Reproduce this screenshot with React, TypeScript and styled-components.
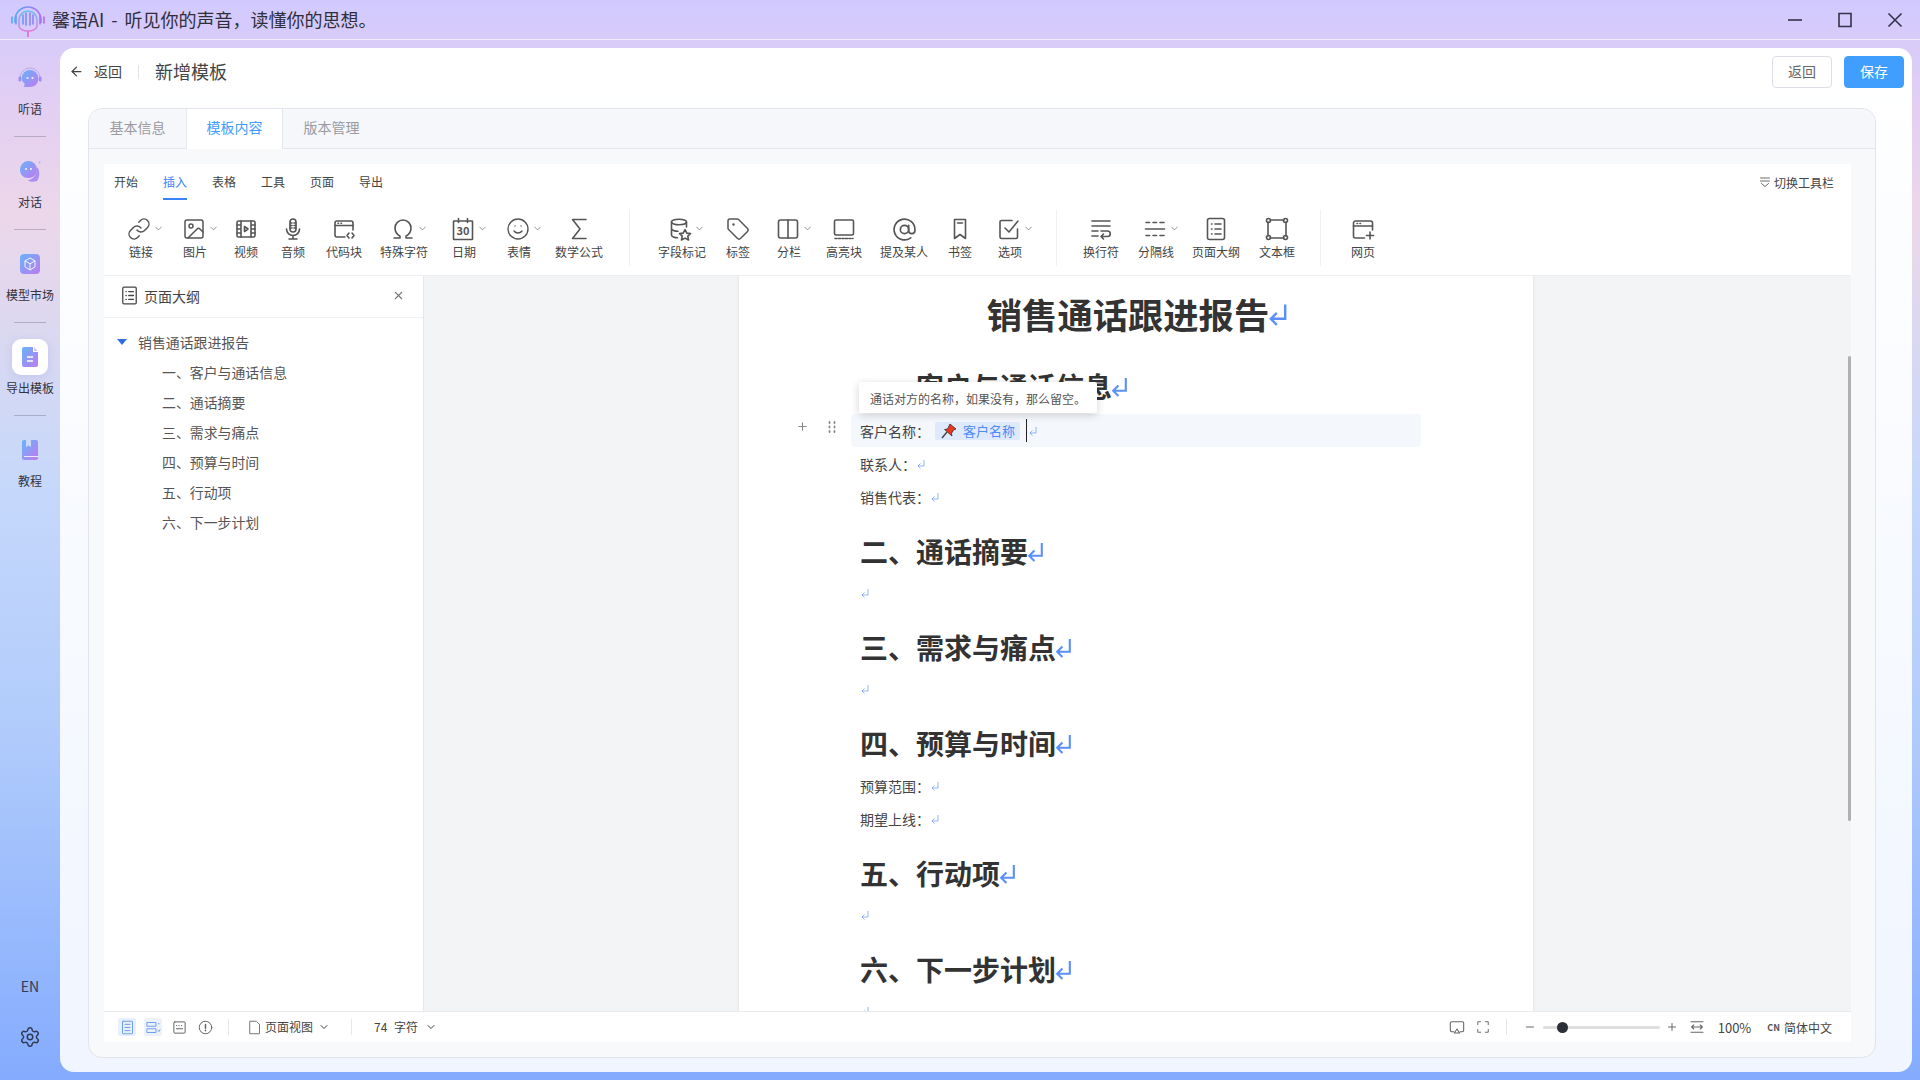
import styled, { createGlobalStyle } from "styled-components";
import type { ReactNode } from "react";
import { ArrowLeft, AtSign, ChevronDown, Image, Link, Minus, Plus, Settings, Smile, Tag, X } from "lucide-react";

const Global = createGlobalStyle`
  html, body { margin: 0; padding: 0; height: 100%; overflow: hidden; }
  body { font-family: "Noto Sans CJK SC", "Noto Sans", sans-serif; color: #333; }
  #root { height: 100%; }
`;

const Shell = styled.div`
  height: 1080px;
  display: flex;
  flex-direction: column;
  background: linear-gradient(180deg, #d1c9fe 0%, #e3cff2 10%, #ecd7ea 20%, #dcd8f0 30%, #c6d8fb 45%, #b0cbfb 68%, #84abfe 100%);
`;

const TitleBar = styled.div`
  height: 39px;
  flex: none;
  display: flex;
  align-items: center;
  padding-left: 10px;
  border-bottom: 1px solid rgba(255, 255, 255, 0.65);
`;

const AppTitle = styled.div`
  font-size: 18px;
  line-height: 24px;
  color: #2f2f3a;
  margin: 0 0 2px 6px;
  word-spacing: 3px;
`;

const WinControls = styled.div`
  margin-left: auto;
  display: flex;
  align-items: center;
  gap: 32px;
  padding-right: 16px;
  color: #33334a;
`;

const WinBtn = styled.svg`
  width: 18px;
  height: 18px;
  display: block;
  stroke: currentColor;
  stroke-width: 1.6;
  fill: none;
`;

const Body = styled.div`
  flex: 1;
  display: flex;
  min-height: 0;
`;

const Sidebar = styled.div`
  width: 60px;
  flex: none;
  display: flex;
  flex-direction: column;
  align-items: center;
  padding: 20px 0 32px;
  box-sizing: border-box;
`;

const NavIcon = styled.div<{ $active?: boolean }>`
  width: 36px;
  height: 36px;
  display: flex;
  align-items: center;
  justify-content: center;
  border-radius: 9px;
  background: ${(p) => (p.$active ? "#fff" : "transparent")};
  box-shadow: ${(p) => (p.$active ? "0 2px 8px rgba(120,130,200,.2)" : "none")};
`;

const NavLabel = styled.div`
  font-size: 12px;
  line-height: 16px;
  margin-top: 5px;
  color: #33333f;
  white-space: nowrap;
`;

const NavDivider = styled.div`
  width: 32px;
  height: 1px;
  margin: 19px 0 16px;
  background: rgba(110, 110, 130, 0.4);
`;

const Lang = styled.div`
  margin-top: auto;
  font-size: 14px;
  line-height: 20px;
  color: #2f3a55;
`;

const Gear = styled.div`
  margin-top: 30px;
  height: 22px;
  color: #2f3a55;
`;

const Panel = styled.div`
  flex: 1;
  min-width: 0;
  margin: 8px 8px 8px 0;
  border-radius: 14px;
  background: linear-gradient(180deg, #ffffff 0%, #f0f5ff 100%);
  display: flex;
  flex-direction: column;
`;

const Header = styled.div`
  height: 48px;
  flex: none;
  display: flex;
  align-items: center;
  padding: 0 8px 0 9px;
`;

const BackLink = styled.div`
  display: flex;
  align-items: center;
  gap: 10px;
  font-size: 14px;
  color: #444;
  padding-bottom: 2px;
`;

const HeaderSep = styled.div`
  width: 1px;
  height: 14px;
  background: #dfe2e8;
  margin: 0 16px;
`;

const PageName = styled.div`
  font-size: 18px;
  color: #444;
  padding-bottom: 2px;
`;

const HeaderActions = styled.div`
  margin-left: auto;
  display: flex;
  gap: 12px;
`;

const Btn = styled.div<{ $primary?: boolean }>`
  width: 60px;
  height: 32px;
  box-sizing: border-box;
  border-radius: 4px;
  padding-bottom: 2px;
  display: flex;
  align-items: center;
  justify-content: center;
  font-size: 14px;
  color: ${(p) => (p.$primary ? "#fff" : "#666")};
  background: ${(p) => (p.$primary ? "#409eff" : "#fff")};
  border: 1px solid ${(p) => (p.$primary ? "#409eff" : "#dcdfe6")};
`;

const Card = styled.div`
  flex: 1;
  min-height: 0;
  margin: 12px 36px 14px 28px;
  border: 1px solid #e1e4ec;
  border-radius: 14px;
  background: #f8f9fa;
  display: flex;
  flex-direction: column;
  overflow: hidden;
`;

const TabBar = styled.div`
  height: 39px;
  flex: none;
  display: flex;
  background: #f5f7fb;
  border-bottom: 1px solid #e4e7ed;
`;

const Tab = styled.div<{ $active?: boolean }>`
  width: 97px;
  height: ${(p) => (p.$active ? "40px" : "39px")};
  box-sizing: border-box;
  padding-bottom: 4px;
  display: flex;
  align-items: center;
  justify-content: center;
  font-size: 14px;
  color: ${(p) => (p.$active ? "#409eff" : "#9a9a9f")};
  background: ${(p) => (p.$active ? "#fff" : "transparent")};
  border-left: 1px solid ${(p) => (p.$active ? "#e4e7ed" : "transparent")};
  border-right: 1px solid ${(p) => (p.$active ? "#e4e7ed" : "transparent")};
`;

const CardBody = styled.div`
  flex: 1;
  min-height: 0;
  padding: 15px 24px 15px 15px;
  display: flex;
`;

const Editor = styled.div`
  flex: 1;
  min-width: 0;
  display: flex;
  flex-direction: column;
  background: #fff;
`;

const Ribbon = styled.div`
  height: 112px;
  flex: none;
  box-sizing: border-box;
  border-bottom: 1px solid #eceef1;
`;

const RibbonTabs = styled.div`
  height: 36px;
  display: flex;
  padding: 0 17px 0 10px;
  box-sizing: border-box;
`;

const RibbonTab = styled.div<{ $active?: boolean }>`
  margin-right: 25px;
  font-size: 12px;
  line-height: 36px;
  color: ${(p) => (p.$active ? "#3b82f6" : "#444")};
  border-bottom: 2px solid ${(p) => (p.$active ? "#3b82f6" : "transparent")};
`;

const ToggleBar = styled.div`
  margin-left: auto;
  display: flex;
  align-items: center;
  gap: 3px;
  font-size: 12px;
  color: #444;
`;

const ToolRow = styled.div`
  height: 75px;
  display: flex;
  align-items: center;
  padding: 1px 0 0 10px;
  box-sizing: border-box;
`;

const Tool = styled.div<{ $w: number }>`
  width: ${(p) => p.$w}px;
  flex: none;
  display: flex;
  flex-direction: column;
  align-items: center;
  color: #555;
`;

const ToolIcon = styled.div<{ $shift?: number }>`
  position: relative;
  width: 24px;
  height: 24px;
  margin-left: ${(p) => p.$shift ?? 0}px;
`;

const Caret = styled.div`
  position: absolute;
  left: 26px;
  top: 6px;
  line-height: 0;
  color: #888;
`;

const ToolLabel = styled.div`
  font-size: 12px;
  line-height: 16px;
  margin-top: 3px;
  color: #444;
  white-space: nowrap;
`;

const ToolSep = styled.div<{ $gap?: number }>`
  width: 1px;
  height: 56px;
  flex: none;
  margin: 0 ${(p) => p.$gap ?? 17}px;
  background: #eef0f2;
`;

const Work = styled.div`
  flex: 1;
  min-height: 0;
  display: flex;
  position: relative;
  background: #f3f4f6;
`;

const Outline = styled.div`
  width: 319px;
  flex: none;
  background: #fff;
  border-right: 1px solid #e6e7ea;
`;

const OutlineHead = styled.div`
  height: 42px;
  box-sizing: border-box;
  display: flex;
  align-items: center;
  padding: 0 18px 2px 16px;
  border-bottom: 1px solid #f0f1f3;
  font-size: 14px;
  color: #444;
  gap: 5px;
`;

const CloseBtn = styled.div`
  margin-left: auto;
  line-height: 0;
  color: #777;
`;

const OutlineList = styled.div`
  padding-top: 9px;
`;

const OutlineRoot = styled.div`
  display: flex;
  align-items: center;
  height: 30px;
  padding-left: 13px;
  gap: 11px;
  font-size: 13.9px;
  color: #555;
`;

const RootCaret = styled.div`
  width: 0;
  height: 0;
  border-left: 5px solid transparent;
  border-right: 5px solid transparent;
  border-top: 6px solid #2f6fe4;
`;

const OutlineItem = styled.div`
  height: 30px;
  line-height: 30px;
  padding-left: 58px;
  font-size: 13.9px;
  color: #555;
`;

const Canvas = styled.div`
  flex: 1;
  min-width: 0;
  display: flex;
  padding-left: 315px;
  overflow: hidden;
`;

const Page = styled.div`
  width: 794px;
  flex: none;
  box-sizing: border-box;
  padding: 13px 92px 0 121px;
  background: #fff;
  box-shadow: 0 0 3px rgba(0, 0, 0, 0.12);
  position: relative;
`;

const DocTitle = styled.div`
  font-size: 35.3px;
  line-height: 50px;
  font-weight: 700;
  text-align: center;
  color: #333;
  margin: 0 0 27px -24px;
  display: flex;
  justify-content: center;
  align-items: center;

  svg {
    margin-left: -3px;
  }
`;

const H1 = styled.div<{ $mb?: number }>`
  font-size: 28px;
  line-height: 40px;
  height: 40px;
  font-weight: 700;
  color: #333;
  margin: 18px 0 ${(p) => p.$mb ?? 5}px;
  display: flex;
  align-items: center;
  white-space: nowrap;

  svg {
    margin-left: -3px;
  }
`;

const Para = styled.div`
  height: 33px;
  font-size: 14px;
  display: flex;
  align-items: center;
  color: #444;
`;

const ActiveRow = styled(Para)`
  margin: 0 20px 0 -9px;
  padding-left: 9px;
  background: #f4f7fc;
  border-radius: 4px;
  position: relative;
`;

const RowHandles = styled.div`
  position: absolute;
  left: -55px;
  top: 6px;
  display: flex;
  gap: 17px;
  align-items: center;
  color: #888;
`;

const Tip = styled.div`
  position: absolute;
  left: 8px;
  top: -32px;
  width: 238px;
  height: 31px;
  box-sizing: border-box;
  padding-left: 11px;
  line-height: 33px;
  font-size: 12px;
  color: #555;
  background: #fff;
  border-radius: 2px;
  box-shadow: 0 2px 8px rgba(0, 0, 0, 0.18);
  white-space: nowrap;
`;

const Chip = styled.div`
  width: 85px;
  height: 18px;
  margin-left: 5px;
  padding-left: 6px;
  box-sizing: border-box;
  border-radius: 2px;
  background: #deeafc;
  color: #4d8bf5;
  font-size: 13px;
  display: flex;
  align-items: center;
  gap: 6px;
  white-space: nowrap;
`;

const Caretline = styled.div`
  width: 1px;
  height: 23px;
  margin: 0 1px 0 6px;
  background: #222;
`;

const Thumb = styled.div`
  position: absolute;
  right: 0;
  top: 80px;
  width: 3px;
  height: 465px;
  background: #b0b0b2;
  border-radius: 2px;
`;

const Foot = styled.div`
  height: 31px;
  flex: none;
  box-sizing: border-box;
  border-top: 1px solid #e8e9ec;
  display: flex;
  align-items: center;
  padding: 0 19px 0 14px;
  font-size: 12px;
  color: #444;
`;

const FootBox = styled.div<{ $tone?: string }>`
  width: 18px;
  height: 18px;
  margin-right: 8px;
  border-radius: 2px;
  background: ${(p) => p.$tone ?? "transparent"};
  display: flex;
  align-items: center;
  justify-content: center;
`;

const FootSep = styled.div<{ $l: number; $r: number }>`
  width: 1px;
  height: 16px;
  background: #e6e7ea;
  margin: 0 ${(p) => p.$r}px 0 ${(p) => p.$l}px;
`;

const FootText = styled.div`
  display: flex;
  align-items: center;
  white-space: nowrap;
  line-height: 0;
`;

const FootLabel = styled.span`
  line-height: 16px;
  margin-left: 3px;
  word-spacing: 4px;
`;

const FootRight = styled.div`
  margin-left: auto;
  display: flex;
  align-items: center;
`;

const Track = styled.div`
  width: 117px;
  height: 3px;
  margin: 0 6px 0 7px;
  background: #dedede;
  border-radius: 2px;
  position: relative;
`;

const Knob = styled.div`
  position: absolute;
  left: 14px;
  top: -4px;
  width: 11px;
  height: 11px;
  border-radius: 50%;
  background: #2b2f36;
`;

const Zoom = styled.div`
  margin: 0 16px 0 13px;
  font-size: 13px;
`;

const CN = styled.span`
  font-size: 9px;
  font-weight: 700;
  margin-right: 4px;
  color: #555;
`;

const Glyph = styled.svg`
  width: 24px;
  height: 24px;
  display: block;
  fill: none;
  stroke: currentColor;
  stroke-width: 1.6;
  stroke-linecap: round;
  stroke-linejoin: round;
`;

const SmallGlyph = styled(Glyph)<{ $s?: number }>`
  width: ${(p) => p.$s ?? 16}px;
  height: ${(p) => p.$s ?? 16}px;
  flex: none;
`;

const ReturnGlyph = styled.svg<{ $s: number }>`
  width: ${(p) => p.$s}px;
  height: ${(p) => p.$s}px;
  flex: none;
  display: block;
  fill: none;
  stroke: #5b8ff9;
  stroke-width: ${(p) => (p.$s > 12 ? 2 : 1.3)};
`;

const Ret = ({ s }: { s: number }) => (
  <ReturnGlyph $s={s} viewBox="0 0 20 20">
    <path d="M16 2v12H4M9 9l-5 5 5 5" />
  </ReturnGlyph>
);

const Icon = ({ children }: { children: ReactNode }) => <Glyph viewBox="0 0 24 24">{children}</Glyph>;

const tabs = ["开始", "插入", "表格", "工具", "页面", "导出"];

type ToolDef = { label: string; w: number; caret?: boolean; shift?: number; icon: ReactNode };

const groupA: ToolDef[] = [
  { label: "链接", w: 54, caret: true, shift: -4, icon: <Link size={24} strokeWidth={1.5} /> },
  { label: "图片", w: 54, caret: true, shift: -2, icon: <Image size={24} strokeWidth={1.5} /> },
  {
    label: "视频", w: 48,
    icon: (
      <Icon>
        <rect x="3" y="4" width="18" height="16" rx="1.5" />
        <path d="M7 4v16M17 4v16M3 8h4M3 12h4M3 16h4M17 8h4M17 12h4M17 16h4" />
        <path d="M10.500 9.500l3.500 2.500-3.500 2.500z" />
      </Icon>
    ),
  },
  {
    label: "音频", w: 46,
    icon: (
      <Icon>
        <rect x="9" y="2" width="6" height="13" rx="3" />
        <path d="M9 6h2M9 8.500h2M9 11h2M13 6h2M13 8.500h2M13 11h2" />
        <path d="M5.500 12a6.500 6.500 0 0 0 13 0M12 18.500V22M8 22h8" />
      </Icon>
    ),
  },
  {
    label: "代码块", w: 56,
    icon: (
      <Icon>
        <path d="M21 13V6a2 2 0 0 0-2-2H5a2 2 0 0 0-2 2v12a2 2 0 0 0 2 2h8" />
        <path d="M3 8.500h18M6 6.200h.5M9 6.200h.5M17 16l-2 2.500 2 2.500M20 16l2 2.500-2 2.500" />
      </Icon>
    ),
  },
  {
    label: "特殊字符", w: 64, caret: true, shift: -2,
    icon: (
      <Icon>
        <path d="M3 21h6v-1.800C6 17.500 4 14.500 4 11a8 8 0 0 1 16 0c0 3.500-2 6.500-5 8.200V21h6" />
      </Icon>
    ),
  },
  {
    label: "日期", w: 56, caret: true, shift: -3,
    icon: (
      <Icon>
        <rect x="2.500" y="4" width="19" height="18.500" rx="0.5" />
        <path d="M7.500 1.500v4M16.500 1.500v4" />
        <text x="12" y="18" textAnchor="middle" fontSize="11" fontWeight="700" fill="currentColor" stroke="none">30</text>
      </Icon>
    ),
  },
  { label: "表情", w: 54, caret: true, shift: -2, icon: <Smile size={24} strokeWidth={1.4} /> },
  {
    label: "数学公式", w: 66,
    icon: (
      <Icon>
        <path d="M19 2.500H5.500L13 12l-7.500 9.500H19" />
      </Icon>
    ),
  },
];

const groupB: ToolDef[] = [
  {
    label: "字段标记", w: 70, caret: true, shift: -5,
    icon: (
      <Icon>
        <ellipse cx="11" cy="5" rx="7.500" ry="2.800" />
        <path d="M3.500 5v13c0 1.600 3 2.800 6 2.800M18.500 5v5M3.500 11.500c0 1.500 3 2.800 6.500 2.800" />
        <path d="M17 12.500l1.800 3.600 3.700.5-2.700 2.600.7 3.800-3.500-1.900-3.500 1.900.7-3.800-2.700-2.600 3.700-.5z" fill="#fff" />
      </Icon>
    ),
  },
  { label: "标签", w: 42, icon: <Tag size={24} strokeWidth={1.5} /> },
  {
    label: "分栏", w: 60, caret: true, shift: -2,
    icon: (
      <Icon>
        <rect x="2.500" y="3" width="19" height="18" rx="2" />
        <path d="M12 3v18" />
      </Icon>
    ),
  },
  {
    label: "高亮块", w: 50,
    icon: (
      <Icon>
        <rect x="2.500" y="3" width="19" height="15" rx="1.500" />
        <path d="M3 21.500h18" strokeDasharray="2 1.500" />
      </Icon>
    ),
  },
  { label: "提及某人", w: 70, icon: <AtSign size={25} strokeWidth={1.6} /> },
  {
    label: "书签", w: 42,
    icon: (
      <Icon>
        <path d="M6.500 2.500h11v19L12 17.500l-5.500 4z" />
        <path d="M9.500 6h5" />
      </Icon>
    ),
  },
  {
    label: "选项", w: 58, caret: true, shift: -2,
    icon: (
      <Icon>
        <path d="M20.500 12v8a1.500 1.500 0 0 1-1.500 1.500H4.500A1.500 1.500 0 0 1 3 20V5a1.500 1.500 0 0 1 1.500-1.500H15" />
        <path d="M8 11l4 4 9-11" />
      </Icon>
    ),
  },
];

const groupC: ToolDef[] = [
  {
    label: "换行符", w: 54,
    icon: (
      <Icon>
        <path d="M3 4h18M3 9h18M3 14h6M3 19h6" />
        <path d="M12 14h6.500a2.500 2.500 0 0 1 0 5.500H12M14.500 17l-2.500 2.500 2.500 2.500" />
      </Icon>
    ),
  },
  {
    label: "分隔线", w: 56, caret: true, shift: -2,
    icon: (
      <Icon>
        <path d="M2.500 12h19M3 5.500h3.500M10 5.500h3.500M17 5.500h4M3 18.500h3.500M10 18.500h3.500M17 18.500h4" />
      </Icon>
    ),
  },
  {
    label: "页面大纲", w: 64,
    icon: (
      <Icon>
        <rect x="3.500" y="1.500" width="17" height="21" rx="2" />
        <path d="M7.500 7h.5M7.500 12h.5M7.500 17h.5M11 7h6M11 12h6M11 17h6" />
      </Icon>
    ),
  },
  {
    label: "文本框", w: 58,
    icon: (
      <Icon>
        <path d="M5 3h14M5 21h14M3 5v14M21 5v14" />
        <circle cx="3.500" cy="3.500" r="2" />
        <circle cx="20.500" cy="3.500" r="2" />
        <circle cx="3.500" cy="20.500" r="2" />
        <circle cx="20.500" cy="20.500" r="2" />
      </Icon>
    ),
  },
];

const groupD: ToolDef[] = [
  {
    label: "网页", w: 56,
    icon: (
      <Icon>
        <path d="M21.500 13V6a2 2 0 0 0-2-2h-15a2 2 0 0 0-2 2v13a2 2 0 0 0 2 2h9" />
        <path d="M2.500 9h19M6 6.500h.5M9 6.500h.5M19 15v7M15.500 18.500h7" />
      </Icon>
    ),
  },
];

const renderTools = (list: ToolDef[]) =>
  list.map((t) => (
    <Tool key={t.label} $w={t.w}>
      <ToolIcon $shift={t.shift}>
        {t.icon}
        {t.caret ? (
          <Caret>
            <ChevronDown size={11} />
          </Caret>
        ) : null}
      </ToolIcon>
      <ToolLabel>{t.label}</ToolLabel>
    </Tool>
  ));

const outlineItems = ["一、客户与通话信息", "二、通话摘要", "三、需求与痛点", "四、预算与时间", "五、行动项", "六、下一步计划"];

const Logo = () => (
  <svg width="36" height="36" viewBox="0 0 36 36" fill="none">
    <defs>
      <linearGradient id="lg" x1="0" y1="0" x2="1" y2="0">
        <stop offset="0" stopColor="#5aa7f7" />
        <stop offset="0.5" stopColor="#7f8cf5" />
        <stop offset="1" stopColor="#b56cf0" />
      </linearGradient>
      <linearGradient id="lp" x1="0" y1="0" x2="0" y2="1">
        <stop offset="0" stopColor="#64c0f5" />
        <stop offset="1" stopColor="#e07ad8" />
      </linearGradient>
    </defs>
    <path d="M5 21V18a13 13 0 0 1 26 0v3" stroke="url(#lg)" strokeWidth="1.6" />
    <path d="M9 20v-2a9 9 0 0 1 18 0v6a9 5 0 0 1-18 0z" stroke="url(#lp)" strokeWidth="1.5" />
    <path d="M2 15v6M6 14v8M13 13v9M16 11v12M20 11v12M23 13v9M30 14v8M34 15v6" stroke="url(#lg)" strokeWidth="1.6" strokeLinecap="round" />
    <path d="M18 29v6" stroke="#d77ee0" strokeWidth="2" />
  </svg>
);

const NavGrad = ({ id }: { id: string }) => (
  <defs>
    <linearGradient id={id} x1="0" y1="0" x2="1" y2="1">
      <stop offset="0" stopColor="#66b4fa" />
      <stop offset="1" stopColor="#c07af0" />
    </linearGradient>
  </defs>
);

const NavListen = () => (
  <svg width="26" height="26" viewBox="0 0 26 26" fill="none">
    <NavGrad id="n1" />
    <path d="M3 13a10 10 0 0 1 20 0" stroke="#b9a9ee" strokeWidth="1" />
    <rect x="1.500" y="11.500" width="2.500" height="5" rx="1.200" fill="#9a8cf0" />
    <rect x="22" y="11.500" width="2.500" height="5" rx="1.200" fill="#9a8cf0" />
    <path d="M13 5a8.500 8.500 0 0 1 8.500 8.500c0 5-4 8.500-8.500 8.500H6.500c1-1 1.300-2.500 1-3.500-2-1.600-3-3-3-5A8.500 8.500 0 0 1 13 5z" fill="url(#n1)" />
    <circle cx="10.500" cy="13" r="1.100" fill="#fff" opacity="0.85" />
    <circle cx="15.500" cy="13" r="1.100" fill="#fff" opacity="0.85" />
  </svg>
);

const NavChat = () => (
  <svg width="26" height="26" viewBox="0 0 26 26" fill="none">
    <NavGrad id="n2" />
    <path d="M20 9c3 3 3 10 0 14-3 1-8 1-9-1 5 0 9-5 9-13z" fill="#a98df0" />
    <path d="M11.500 3a8.500 8.500 0 0 1 8.500 8.500c0 5-4 8.500-8.500 8.500-3 0-5-1-6-2-1.500-1.500-2.500-4-2.500-6.500A8.500 8.500 0 0 1 11.500 3z" fill="url(#n2)" />
    <circle cx="9" cy="11" r="1.100" fill="#fff" opacity="0.85" />
    <circle cx="14" cy="11" r="1.100" fill="#fff" opacity="0.85" />
    <circle cx="22.500" cy="4.500" r="1" fill="#c3a5ef" />
  </svg>
);

const NavMarket = () => (
  <svg width="20" height="20" viewBox="0 0 20 20" fill="none">
    <NavGrad id="n3" />
    <rect width="20" height="20" rx="4" fill="url(#n3)" />
    <path d="M10 4l5 2.800v6L10 16l-5-3.200v-6zM5 6.800l5 3 5-3M10 9.800V16" stroke="#fff" strokeWidth="1" opacity="0.9" />
  </svg>
);

const NavDoc = () => (
  <svg width="16" height="20" viewBox="0 0 16 20" fill="none">
    <NavGrad id="n4" />
    <path d="M2 0h9v5h5v13a2 2 0 0 1-2 2H2a2 2 0 0 1-2-2V2a2 2 0 0 1 2-2z" fill="url(#n4)" />
    <path d="M12 0l4 4h-4z" fill="#d9c8f5" />
    <path d="M5 10h6M5 14h6" stroke="#fff" strokeWidth="1.400" />
  </svg>
);

const NavBook = () => (
  <svg width="16" height="20" viewBox="0 0 16 20" fill="none">
    <NavGrad id="n5" />
    <path d="M2 0h2v7l2.500-1.500L9 7V0h5a2 2 0 0 1 2 2v16a2 2 0 0 1-2 2H2a2 2 0 0 1-2-2V2a2 2 0 0 1 2-2z" fill="url(#n5)" />
    <path d="M2 16.500h14" stroke="#fff" strokeWidth="1" opacity="0.8" />
  </svg>
);

const Pin = () => (
  <svg width="16" height="16" viewBox="0 0 16 16">
    <path d="M1 15l5-6" stroke="#444" strokeWidth="1.400" />
    <path d="M9 1l6 5-2.500 1-2 3.500L11 13 3.500 6.500 6.500 6 8 3z" fill="#e8391f" stroke="#222" strokeWidth="0.700" />
  </svg>
);

export default function App() {
  return (
    <Shell>
      <Global />
      <TitleBar>
        <Logo />
        <AppTitle>馨语AI - 听见你的声音，读懂你的思想。</AppTitle>
        <WinControls>
          <WinBtn viewBox="0 0 18 18"><path d="M2 9h14" /></WinBtn>
          <WinBtn viewBox="0 0 18 18"><path d="M3 2.500h12v13H3z" /></WinBtn>
          <WinBtn viewBox="0 0 18 18"><path d="M2.500 2.500l13 13M15.500 2.500l-13 13" /></WinBtn>
        </WinControls>
      </TitleBar>
      <Body>
        <Sidebar>
          <NavIcon><NavListen /></NavIcon>
          <NavLabel>听语</NavLabel>
          <NavDivider />
          <NavIcon><NavChat /></NavIcon>
          <NavLabel>对话</NavLabel>
          <NavDivider />
          <NavIcon><NavMarket /></NavIcon>
          <NavLabel>模型市场</NavLabel>
          <NavDivider />
          <NavIcon $active><NavDoc /></NavIcon>
          <NavLabel>导出模板</NavLabel>
          <NavDivider />
          <NavIcon><NavBook /></NavIcon>
          <NavLabel>教程</NavLabel>
          <Lang>EN</Lang>
          <Gear><Settings size={22} strokeWidth={1.6} /></Gear>
        </Sidebar>
        <Panel>
          <Header>
            <BackLink>
              <ArrowLeft size={15} />
              返回
            </BackLink>
            <HeaderSep />
            <PageName>新增模板</PageName>
            <HeaderActions>
              <Btn>返回</Btn>
              <Btn $primary>保存</Btn>
            </HeaderActions>
          </Header>
          <Card>
            <TabBar>
              <Tab>基本信息</Tab>
              <Tab $active>模板内容</Tab>
              <Tab>版本管理</Tab>
            </TabBar>
            <CardBody>
              <Editor>
                <Ribbon>
                  <RibbonTabs>
                    {tabs.map((t) => (
                      <RibbonTab key={t} $active={t === "插入"}>{t}</RibbonTab>
                    ))}
                    <ToggleBar>
                      <SmallGlyph $s={12} viewBox="0 0 24 24">
                        <path d="M3 4h18M3 10h18M5 15l7 6 7-6" />
                      </SmallGlyph>
                      切换工具栏
                    </ToggleBar>
                  </RibbonTabs>
                  <ToolRow>
                    {renderTools(groupA)}
                    <ToolSep />
                    {renderTools(groupB)}
                    <ToolSep />
                    {renderTools(groupC)}
                    <ToolSep $gap={14} />
                    {renderTools(groupD)}
                  </ToolRow>
                </Ribbon>
                <Work>
                  <Outline>
                    <OutlineHead>
                      <SmallGlyph $s={19} viewBox="0 0 24 24">
                        <rect x="3.500" y="1.500" width="17" height="21" rx="1.500" />
                        <path d="M7.500 7h.5M7.500 12h.5M7.500 17h.5M11 7h6M11 12h6M11 17h6" />
                      </SmallGlyph>
                      页面大纲
                      <CloseBtn><X size={13} /></CloseBtn>
                    </OutlineHead>
                    <OutlineList>
                      <OutlineRoot>
                        <RootCaret />
                        销售通话跟进报告
                      </OutlineRoot>
                      {outlineItems.map((t) => (
                        <OutlineItem key={t}>{t}</OutlineItem>
                      ))}
                    </OutlineList>
                  </Outline>
                  <Canvas>
                    <Page>
                      <DocTitle>销售通话跟进报告<Ret s={24} /></DocTitle>
                      <H1 $mb={8}>一、客户与通话信息<Ret s={21} /></H1>
                      <ActiveRow>
                        <RowHandles>
                          <Plus size={13} />
                          <SmallGlyph $s={12} viewBox="0 0 12 12">
                            <path d="M3.500 1v1M8.500 1v1M3.500 5.500v1M8.500 5.500v1M3.500 10v1M8.500 10v1" strokeWidth="1.800" />
                          </SmallGlyph>
                        </RowHandles>
                        <Tip>通话对方的名称，如果没有，那么留空。</Tip>
                        客户名称：
                        <Chip><Pin />客户名称</Chip>
                        <Caretline />
                        <Ret s={10} />
                      </ActiveRow>
                      <Para>联系人：<Ret s={10} /></Para>
                      <Para>销售代表：<Ret s={10} /></Para>
                      <H1>二、通话摘要<Ret s={21} /></H1>
                      <Para><Ret s={10} /></Para>
                      <H1>三、需求与痛点<Ret s={21} /></H1>
                      <Para><Ret s={10} /></Para>
                      <H1 $mb={6}>四、预算与时间<Ret s={21} /></H1>
                      <Para>预算范围：<Ret s={10} /></Para>
                      <Para>期望上线：<Ret s={10} /></Para>
                      <H1>五、行动项<Ret s={21} /></H1>
                      <Para><Ret s={10} /></Para>
                      <H1>六、下一步计划<Ret s={21} /></H1>
                      <Para><Ret s={10} /></Para>
                    </Page>
                  </Canvas>
                  <Thumb />
                </Work>
                <Foot>
                  <FootBox $tone="#e8f0fd">
                    <SmallGlyph $s={15} viewBox="0 0 24 24" style={{ color: "#6f9ff0" }}>
                      <rect x="4" y="2" width="16" height="20" rx="1" />
                      <path d="M8 7h8M8 12h8M8 17h8" />
                    </SmallGlyph>
                  </FootBox>
                  <FootBox $tone="#edf2fa">
                    <SmallGlyph $s={15} viewBox="0 0 24 24" style={{ color: "#6f9ff0" }}>
                      <rect x="2" y="4" width="14" height="6" />
                      <rect x="2" y="14" width="14" height="6" />
                      <path d="M20 6h1M19 17l1.500 1.500 2-3" />
                    </SmallGlyph>
                  </FootBox>
                  <FootBox>
                    <SmallGlyph $s={15} viewBox="0 0 24 24" style={{ color: "#666" }}>
                      <rect x="3" y="3" width="18" height="18" rx="1.500" />
                      <path d="M7 14h10M7 9h.5M11 9h.5M15 9h.5" />
                    </SmallGlyph>
                  </FootBox>
                  <FootBox>
                    <SmallGlyph $s={15} viewBox="0 0 24 24" style={{ color: "#666" }}>
                      <circle cx="12" cy="12" r="10" />
                      <path d="M12 7v6M12 16.500v.5" strokeWidth="2.400" />
                    </SmallGlyph>
                  </FootBox>
                  <FootSep $l={6} $r={18} />
                  <FootText>
                    <SmallGlyph $s={15} viewBox="0 0 24 24" style={{ color: "#777" }}>
                      <path d="M5 2h10l5 5v15H5z" />
                    </SmallGlyph>
                    <FootLabel>页面视图</FootLabel>
                    <ChevronDown size={12} style={{ marginLeft: 5 }} />
                  </FootText>
                  <FootSep $l={21} $r={19} />
                  <FootText>
                    <FootLabel>74 字符</FootLabel>
                    <ChevronDown size={12} style={{ marginLeft: 7 }} />
                  </FootText>
                  <FootRight>
                    <SmallGlyph $s={16} viewBox="0 0 24 24" style={{ color: "#666" }}>
                      <path d="M7 19H4a2 2 0 0 1-2-2V6a2 2 0 0 1 2-2h16a2 2 0 0 1 2 2v11a2 2 0 0 1-2 2h-3M12 15l4 6H8z" />
                    </SmallGlyph>
                    <SmallGlyph $s={14} viewBox="0 0 24 24" style={{ color: "#666", marginLeft: 11 }}>
                      <path d="M3 8V3h5M16 3h5v5M21 16v5h-5M8 21H3v-5" />
                    </SmallGlyph>
                    <FootSep $l={16} $r={17} />
                    <Minus size={12} color="#666" />
                    <Track><Knob /></Track>
                    <Plus size={12} color="#666" />
                    <SmallGlyph $s={16} viewBox="0 0 24 24" style={{ color: "#666", marginLeft: 11 }}>
                      <path d="M3 4h18M3 20h18M4 12h16M7 9l-3 3 3 3M17 9l3 3-3 3" />
                    </SmallGlyph>
                    <Zoom>100%</Zoom>
                    <CN>CN</CN>
                    简体中文
                  </FootRight>
                </Foot>
              </Editor>
            </CardBody>
          </Card>
        </Panel>
      </Body>
    </Shell>
  );
}
